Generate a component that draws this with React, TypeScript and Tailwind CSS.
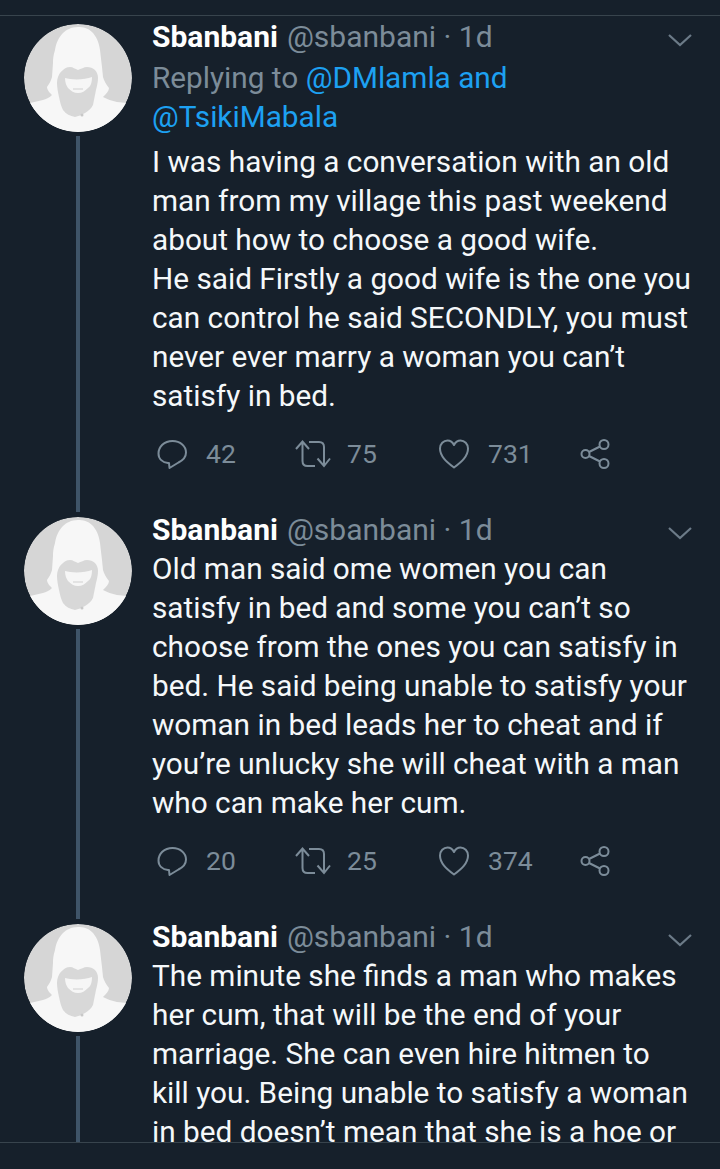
const Avatar = () => (
  <svg viewBox="0 0 108 108" className="w-[108px] h-[108px] shrink-0 rounded-full">
    <circle cx="54" cy="54" r="54" fill="#d6d6d6" />
    <path d="M54 3 C47 3 42 6 39 9 C34 14 32 20 31 26 C29 32 29 36 29 39 L28 53 C27 57 25 60 23 63 C23 66 26 69 28 71 C25 74 22 75 19 76 L6 79 C15 96 33 108 54 108 C76 108 94 96 103 79 L93 78 C88 77 83 75 79 73 C82 70 85 67 85 64 C82 60 80 57 79 53 L78 43 L76 26 C75 18 72 12 68 8 C64 4 59 3 54 3 Z" fill="#f7f7f7" />
    <path d="M39 46 C41 44 43 43 46 43 C49 43 51 45 54 46 C57 45 60 43 63 43 C66 43 69 44 71 46 C73 48 74 51 74 54 C74 58 73 62 72 66 C71 71 70 76 69 81 C67 85 64 87 61 89 C58 91 54 92 51 93 C46 92 42 90 39 86 C37 82 36 78 35 73 C34 68 33 64 33 59 C33 54 35 49 39 46 Z" fill="#d8d8d8" />
    <path d="M41 54 C47 56 61 56 68 53 C68 58 67 62 64 64 C61 67 58 69 54 69 C50 69 47 67 44 64 C42 61 41 58 41 54 Z" fill="#f6f6f6" />
    <path d="M49 65 H59" stroke="#dcdcdc" strokeWidth="1.500" />
    <circle cx="58" cy="91" r="1.500" fill="#c8c8c8" />
  </svg>
);

const Reply = () => (
  <svg viewBox="0 0 30 30" fill="none" stroke="#7c8c99" strokeWidth="2" className="w-[30px] h-[30px] shrink-0">
    <path d="M12 24 H11 C5.500 23.500 1.500 20 1.500 14.500 C1.500 8 7 2 15.500 2 C23.500 2 29 7.500 29 13.500 C29 18.500 25.500 21.500 21.500 23.500 L12.500 29 Z" strokeLinejoin="round" />
  </svg>
);

const Retweet = () => (
  <svg viewBox="0 0 36 30" fill="none" stroke="#7c8c99" strokeWidth="2" className="w-[36px] h-[30px] shrink-0">
    <path d="M1 10 L7.500 2.500 L14 10 M7.500 3.500 V22 C7.500 25.500 9 27 12.500 27 H20" />
    <path d="M14 3 H24 C27.500 3 29 4.500 29 8 V26 M22.500 19.500 L29 27 L35 19.500" />
  </svg>
);

const Heart = () => (
  <svg viewBox="0 0 30 30" fill="none" stroke="#7c8c99" strokeWidth="2" className="w-[30px] h-[30px] shrink-0">
    <path d="M15 28.500 C7 22.500 1 17 1 9.500 C1 5 4.500 1.500 8.500 1.500 C11.500 1.500 13.500 3 15 6 C16.500 3 18.500 1.500 21.500 1.500 C25.500 1.500 29 5 29 9.500 C29 17 23 22.500 15 28.500 Z" strokeLinejoin="round" />
  </svg>
);

const Share = () => (
  <svg viewBox="0 0 30 30" fill="none" stroke="#7c8c99" strokeWidth="2" className="w-[30px] h-[30px] shrink-0">
    <circle cx="5.500" cy="15" r="4" />
    <circle cx="24" cy="5.500" r="4.500" />
    <circle cx="24" cy="24.500" r="4.500" />
    <path d="M9 13 L20 7.500 M9 17 L20 22.500" />
  </svg>
);

const Chevron = () => (
  <svg viewBox="0 0 24 14" fill="none" stroke="#6c7b88" strokeWidth="2.200" className="w-[24px] h-[14px]">
    <path d="M1 2 L12 12 L23 2" />
  </svg>
);

const Tweet = ({
  lines,
  replying,
  stats,
  last,
}: {
  lines: string[];
  replying?: boolean;
  stats?: [string, string, string];
  last?: boolean;
}) => (
  <div className="flex">
    <div className="w-[152px] shrink-0 flex flex-col pl-[24px]">
      <Avatar />
      <div className="w-[4px] flex-1 ml-[52px] mt-[4px] mb-[5px] bg-[#3f5468]" />
    </div>
    <div className="flex-1 min-w-0">
      <div className="flex items-start h-[39px] text-[30px] leading-[39px] -mt-[7px]">
        <span className="font-bold text-white">Sbanbani</span>
        <span className="ml-[9px] text-[#7c8c99]">@sbanbani · 1d</span>
        <div className="ml-auto mr-[28px] mt-[16px]">
          <Chevron />
        </div>
      </div>
      {replying && (
        <div className="text-[29.750px] leading-[39px] text-[#7c8c99] mt-[2px] mb-[6px] whitespace-nowrap">
          <div>
            Replying to <span className="text-[#1da1f2]">@DMlamla and</span>
          </div>
          <div className="text-[#1da1f2]">@TsikiMabala</div>
        </div>
      )}
      <div className="text-[29.750px] leading-[39px] text-[#f5f8fa] whitespace-nowrap">
        {lines.map((l) => (
          <div key={l}>{l}</div>
        ))}
      </div>
      {stats && (
        <div className="flex items-center mt-[21px] mb-[45px] ml-[5px] h-[36px] text-[26.500px] leading-[32px] text-[#7c8c99]">
          <div className="flex items-center gap-[19px] w-[138px]">
            <Reply />
            <span>{stats[0]}</span>
          </div>
          <div className="flex items-center gap-[16px] w-[144px]">
            <Retweet />
            <span>{stats[1]}</span>
          </div>
          <div className="flex items-center gap-[19px] w-[141px]">
            <Heart />
            <span>{stats[2]}</span>
          </div>
          <Share />
        </div>
      )}
      {last && <div className="h-[40px]" />}
    </div>
  </div>
);

export default function App() {
  return (
    <div className="w-[720px] h-[1169px] overflow-hidden bg-[#16202b] font-['Roboto',sans-serif]">
      <div className="h-[15px]" />
      <div className="h-[1px] bg-[#38444d]" />
      <div className="h-[1126px] overflow-hidden pt-[8px]">
        <Tweet
          replying
          lines={[
            "I was having a conversation with an old",
            "man from my village this past weekend",
            "about how to choose a good wife.",
            "He said Firstly a good wife is the one you",
            "can control he said SECONDLY, you must",
            "never ever marry a woman you can’t",
            "satisfy in bed.",
          ]}
          stats={["42", "75", "731"]}
        />
        <Tweet
          lines={[
            "Old man said ome women you can",
            "satisfy in bed and some you can’t so",
            "choose from the ones you can satisfy in",
            "bed. He said being unable to satisfy your",
            "woman in bed leads her to cheat and if",
            "you’re unlucky she will cheat with a man",
            "who can make her cum.",
          ]}
          stats={["20", "25", "374"]}
        />
        <Tweet
          last
          lines={[
            "The minute she finds a man who makes",
            "her cum, that will be the end of your",
            "marriage. She can even hire hitmen to",
            "kill you. Being unable to satisfy a woman",
            "in bed doesn’t mean that she is a hoe or",
          ]}
        />
      </div>
      <div className="h-[1px] bg-[#38444d]" />
    </div>
  );
}
